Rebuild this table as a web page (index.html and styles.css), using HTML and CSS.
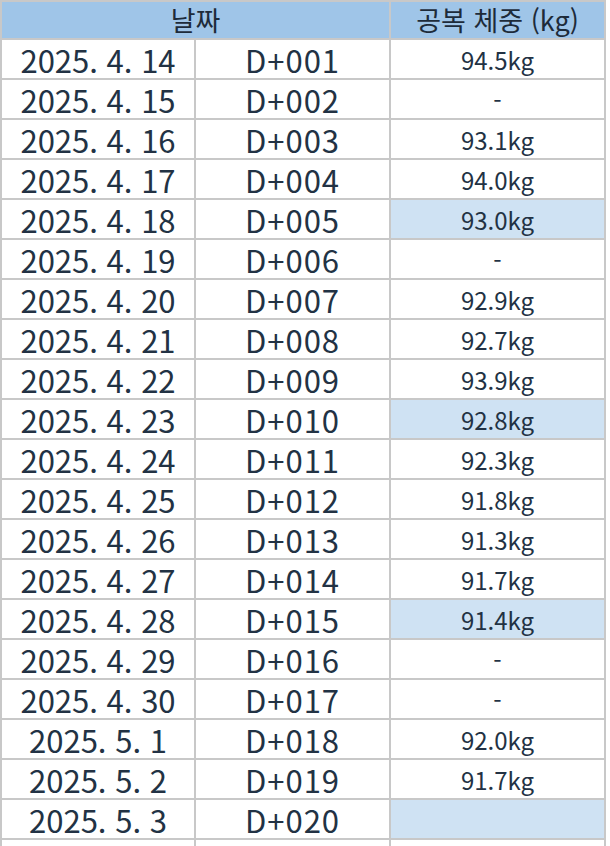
FILE: index.html
```html
<!DOCTYPE html>
<html lang="ko">
<head>
<meta charset="utf-8">
<title>공복 체중</title>
<link rel="stylesheet" href="styles.css">
</head>
<body>
<table class="sheet">
  <colgroup>
    <col class="c-date">
    <col class="c-day">
    <col class="c-weight">
  </colgroup>
  <thead>
    <tr class="head">
      <th colspan="2">날짜</th>
      <th>공복 체중 (kg)</th>
    </tr>
  </thead>
  <tbody>
    <tr><td class="date">2025. 4. 14</td><td class="day">D+001</td><td class="w">94.5kg</td></tr>
    <tr><td class="date">2025. 4. 15</td><td class="day">D+002</td><td class="w">-</td></tr>
    <tr><td class="date">2025. 4. 16</td><td class="day">D+003</td><td class="w">93.1kg</td></tr>
    <tr><td class="date">2025. 4. 17</td><td class="day">D+004</td><td class="w">94.0kg</td></tr>
    <tr><td class="date">2025. 4. 18</td><td class="day">D+005</td><td class="w hl">93.0kg</td></tr>
    <tr><td class="date">2025. 4. 19</td><td class="day">D+006</td><td class="w">-</td></tr>
    <tr><td class="date">2025. 4. 20</td><td class="day">D+007</td><td class="w">92.9kg</td></tr>
    <tr><td class="date">2025. 4. 21</td><td class="day">D+008</td><td class="w">92.7kg</td></tr>
    <tr><td class="date">2025. 4. 22</td><td class="day">D+009</td><td class="w">93.9kg</td></tr>
    <tr><td class="date">2025. 4. 23</td><td class="day">D+010</td><td class="w hl">92.8kg</td></tr>
    <tr><td class="date">2025. 4. 24</td><td class="day">D+011</td><td class="w">92.3kg</td></tr>
    <tr><td class="date">2025. 4. 25</td><td class="day">D+012</td><td class="w">91.8kg</td></tr>
    <tr><td class="date">2025. 4. 26</td><td class="day">D+013</td><td class="w">91.3kg</td></tr>
    <tr><td class="date">2025. 4. 27</td><td class="day">D+014</td><td class="w">91.7kg</td></tr>
    <tr><td class="date">2025. 4. 28</td><td class="day">D+015</td><td class="w hl">91.4kg</td></tr>
    <tr><td class="date">2025. 4. 29</td><td class="day">D+016</td><td class="w">-</td></tr>
    <tr><td class="date">2025. 4. 30</td><td class="day">D+017</td><td class="w">-</td></tr>
    <tr><td class="date">2025. 5. 1</td><td class="day">D+018</td><td class="w">92.0kg</td></tr>
    <tr><td class="date">2025. 5. 2</td><td class="day">D+019</td><td class="w">91.7kg</td></tr>
    <tr><td class="date">2025. 5. 3</td><td class="day">D+020</td><td class="w hl"></td></tr>
    <tr><td class="date"></td><td class="day"></td><td class="w"></td></tr>
  </tbody>
</table>
</body>
</html>
```

FILE: styles.css
```css
html, body {
  margin: 0;
  padding: 0;
  background: #ffffff;
}
body {
  width: 610px;
  height: 846px;
  overflow: hidden;
  font-family: "Noto Sans CJK KR", "Noto Sans", sans-serif;
  color: #223244;
}
.sheet {
  border-collapse: separate;
  border-spacing: 0;
  table-layout: fixed;
  width: 606px;
  border-left: 2px solid #c8c8c8;
  border-top: 2px solid #c8c8c8;
}
.c-date { width: 194px; }
.c-day { width: 195px; }
.c-weight { width: 215px; }
.sheet th,
.sheet td {
  padding: 0;
  border-right: 2px solid #c8c8c8;
  border-bottom: 2px solid #c8c8c8;
  text-align: center;
  vertical-align: middle;
  white-space: nowrap;
}
.head th {
  height: 36px;
  line-height: 36px;
  background: #9fc5e8;
  font-weight: 400;
  font-size: 27px;
  color: #1d2b3a;
}
.sheet td {
  height: 37px;
  line-height: 37px;
  padding-top: 1px;
}
.date {
  font-size: 31px;
}
.day {
  font-size: 31px;
  letter-spacing: 1px;
}
.w {
  font-size: 24px;
}
.hl {
  background: #cfe2f3;
}
```
